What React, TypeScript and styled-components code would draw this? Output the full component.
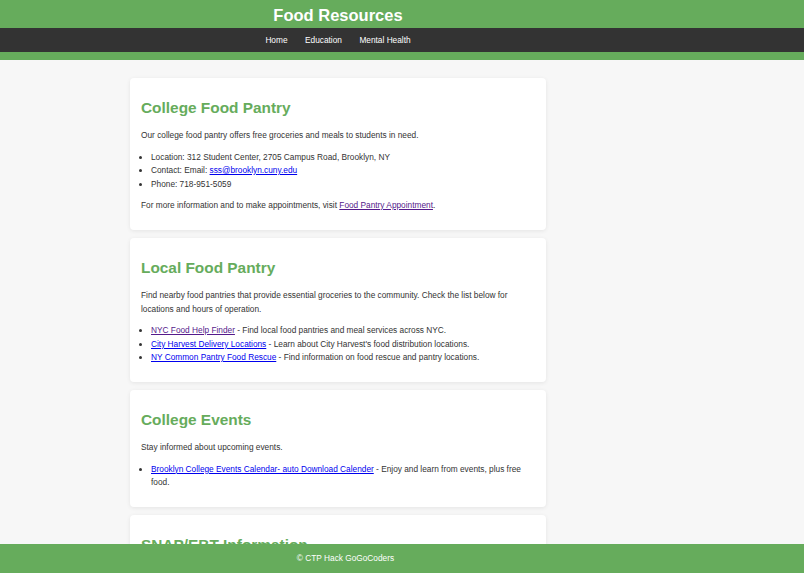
import * as React from "react";
import styled, { createGlobalStyle } from "styled-components";

const GlobalStyle = createGlobalStyle`
  html, body {
    margin: 0;
    padding: 0;
    background: #f7f7f7;
    font-family: "Liberation Sans", Arial, sans-serif;
    color: #333;
  }
`;

const Header = styled.header`
  background: #66ac5c;
  padding-bottom: 8px;
`;

const Column = styled.div`
  width: 676px;
`;

const Title = styled.h1`
  margin: 0;
  height: 28px;
  line-height: 30px;
  text-align: center;
  color: #fff;
  font-size: 16.5px;
  font-weight: bold;
`;

const Nav = styled.nav`
  background: #333;
  height: 24px;
`;

const NavList = styled.ul`
  display: flex;
  justify-content: center;
  align-items: center;
  gap: 17.5px;
  height: 24px;
  margin: 0;
  padding: 0;
  list-style: none;
  font-size: 8.3px;
  line-height: 12px;
`;

const NavLink = styled.a`
  color: #fff;
  text-decoration: none;
`;

const Main = styled.main`
  display: flex;
  flex-direction: column;
  align-items: center;
  gap: 8px;
  padding: 18px 0 60px;
`;

const Card = styled.section`
  width: 416px;
  box-sizing: border-box;
  background: #fff;
  border-radius: 4px;
  box-shadow: 0 1px 4px rgba(0, 0, 0, 0.08);
  padding: 9px 11px 9.5px;
`;

const Heading = styled.h2`
  margin: 12px 0;
  color: #66ac5c;
  font-size: 15.4px;
  line-height: 18px;
`;

const Text = styled.p`
  margin: 8px 0;
  font-size: 8.3px;
  line-height: 13.5px;
`;

const List = styled.ul`
  margin: 8px 0;
  padding-left: 10px;
  font-size: 8.3px;
  line-height: 13.5px;
`;

const Link = styled.a<{ $visited?: boolean }>`
  color: ${(p) => (p.$visited ? "#551a8b" : "#0000ee")};
  text-decoration: underline;
`;

const Footer = styled.footer`
  position: fixed;
  left: 0;
  right: 0;
  bottom: 0;
  height: 29px;
  background: #66ac5c;
`;

const FooterText = styled.p`
  width: 691px;
  margin: 0;
  line-height: 29px;
  text-align: center;
  color: #fff;
  font-size: 8.3px;
`;

export default function App() {
  return (
    <>
      <GlobalStyle />
      <Header>
        <Column>
          <Title>Food Resources</Title>
        </Column>
        <Nav>
          <Column>
            <NavList>
              <li><NavLink href="#">Home</NavLink></li>
              <li><NavLink href="#">Education</NavLink></li>
              <li><NavLink href="#">Mental Health</NavLink></li>
            </NavList>
          </Column>
        </Nav>
      </Header>

      <Column>
        <Main>
          <Card>
            <Heading>College Food Pantry</Heading>
            <Text>Our college food pantry offers free groceries and meals to students in need.</Text>
            <List>
              <li>Location: 312 Student Center, 2705 Campus Road, Brooklyn, NY</li>
              <li>Contact: Email: <Link href="#">sss@brooklyn.cuny.edu</Link></li>
              <li>Phone: 718-951-5059</li>
            </List>
            <Text>
              For more information and to make appointments, visit{" "}
              <Link $visited href="#">Food Pantry Appointment</Link>.
            </Text>
          </Card>

          <Card>
            <Heading>Local Food Pantry</Heading>
            <Text>
              Find nearby food pantries that provide essential groceries to the community. Check the list below for
              locations and hours of operation.
            </Text>
            <List>
              <li><Link $visited href="#">NYC Food Help Finder</Link> - Find local food pantries and meal services across NYC.</li>
              <li><Link href="#">City Harvest Delivery Locations</Link> - Learn about City Harvest's food distribution locations.</li>
              <li><Link href="#">NY Common Pantry Food Rescue</Link> - Find information on food rescue and pantry locations.</li>
            </List>
          </Card>

          <Card>
            <Heading>College Events</Heading>
            <Text>Stay informed about upcoming events.</Text>
            <List>
              <li>
                <Link href="#">Brooklyn College Events Calendar- auto Download Calender</Link> - Enjoy and learn from events, plus free
                food.
              </li>
            </List>
          </Card>

          <Card>
            <Heading>SNAP/EBT Information</Heading>
            <Text>Learn how to apply for SNAP benefits and use your EBT card for groceries.</Text>
            <List>
              <li><Link href="#">ACCESS HRA</Link> - Apply for SNAP and manage your case online.</li>
            </List>
          </Card>
        </Main>
      </Column>

      <Footer>
        <FooterText>© CTP Hack GoGoCoders</FooterText>
      </Footer>
    </>
  );
}
